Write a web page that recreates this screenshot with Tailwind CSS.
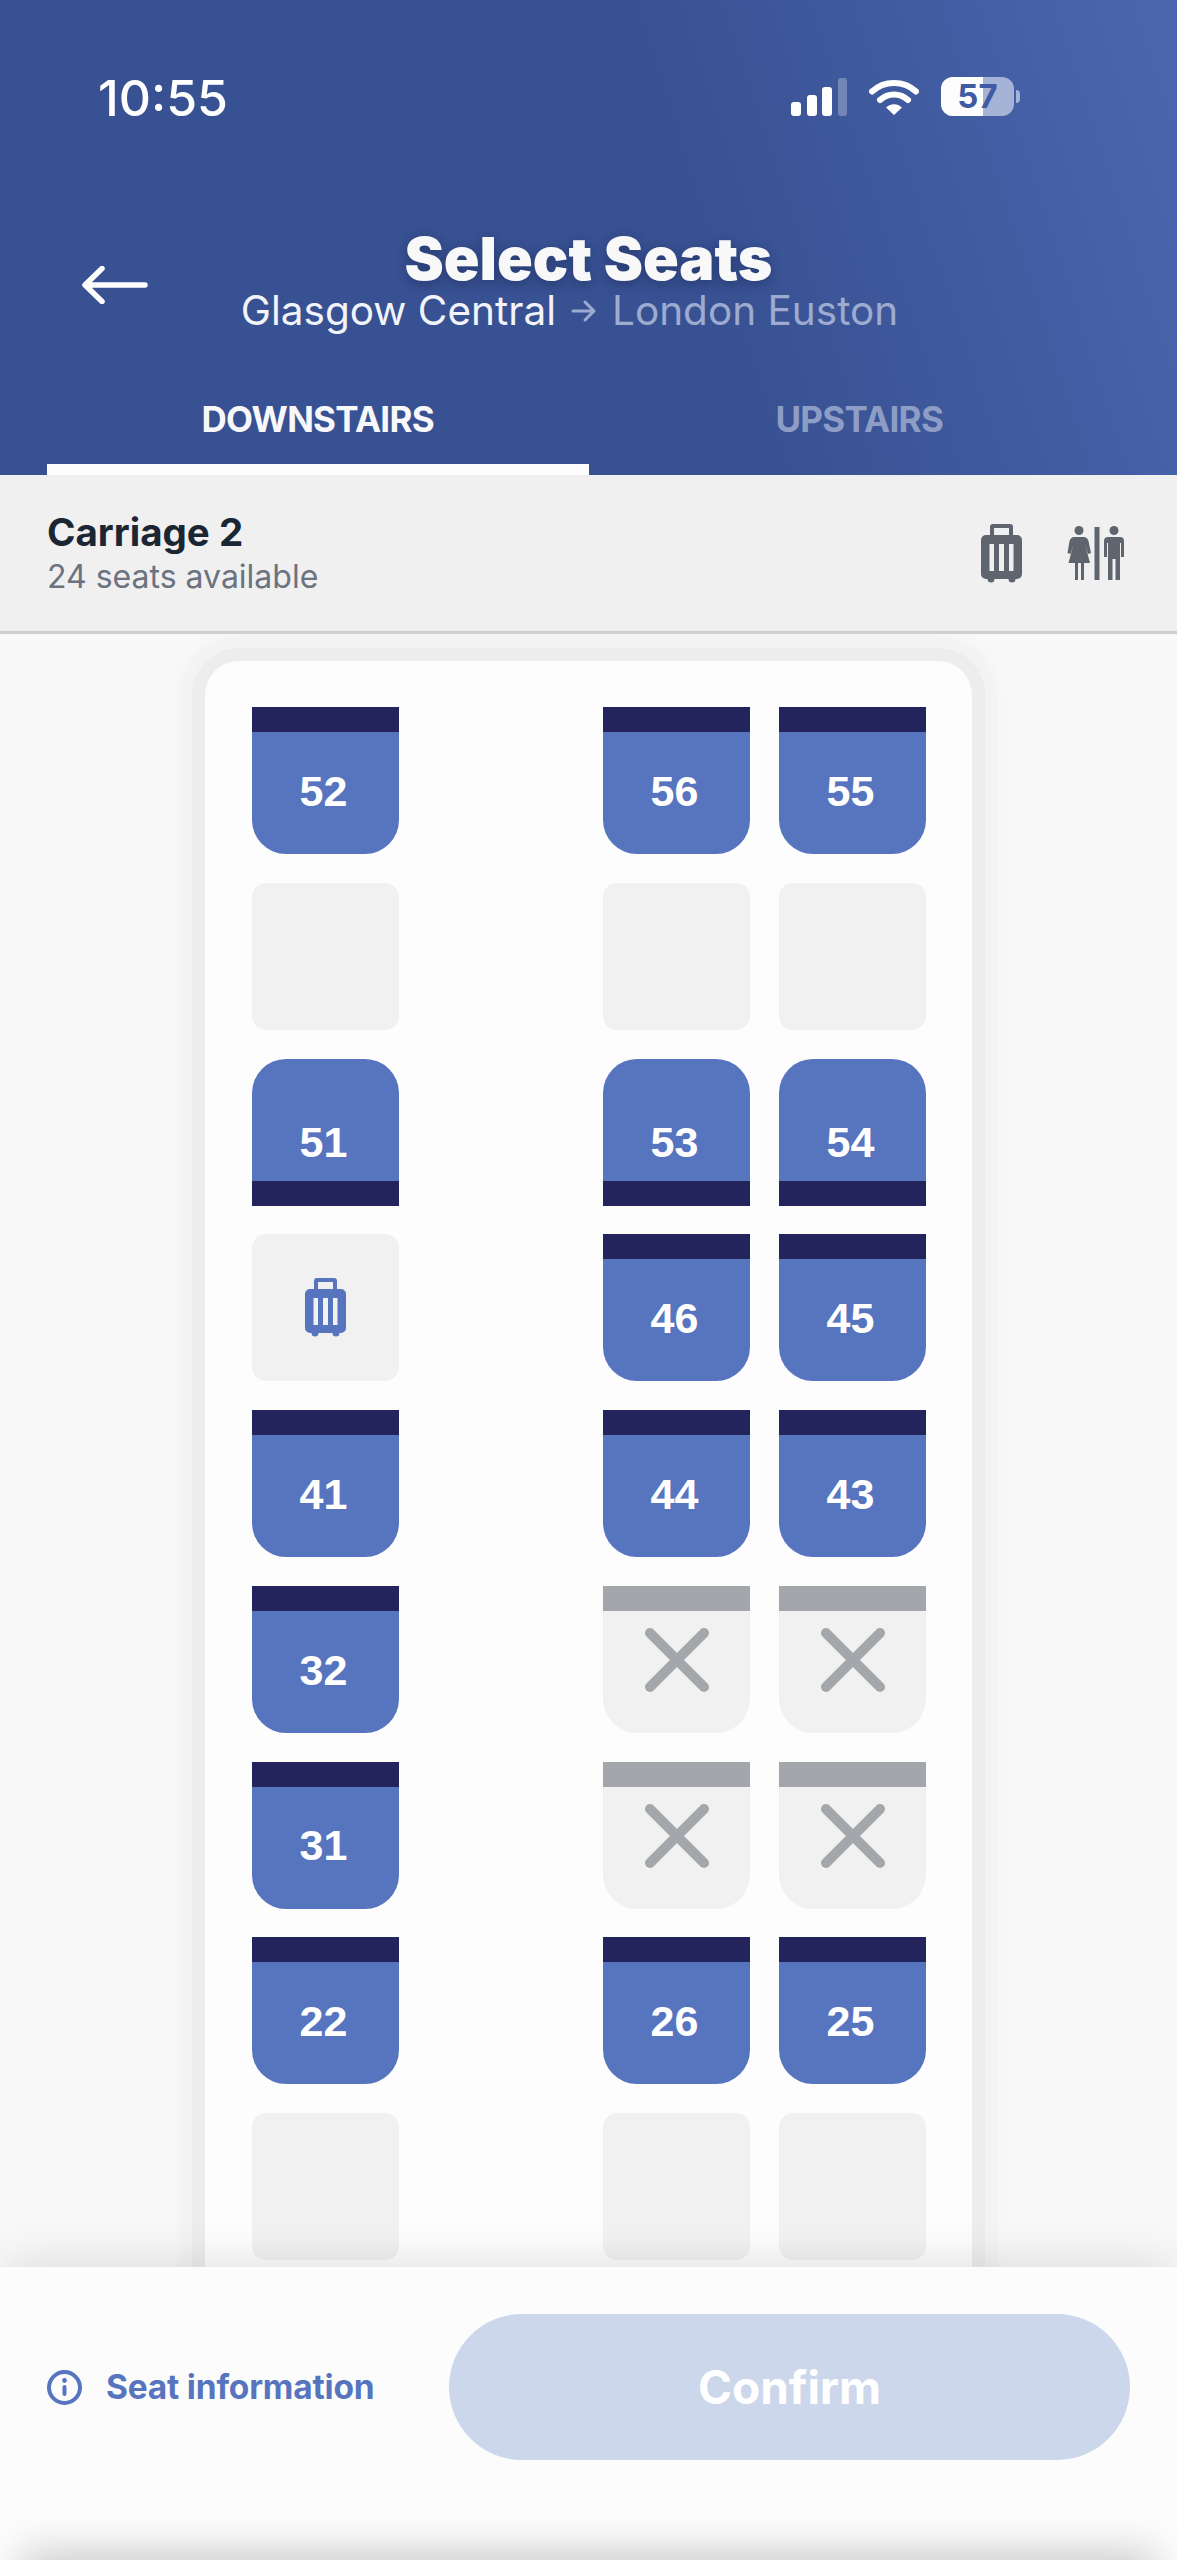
<!DOCTYPE html>
<html>
<head>
<meta charset="utf-8">
<script src="https://cdn.jsdelivr.net/npm/@tailwindcss/browser@4"></script>
</head>
<body class="m-0">
<div class="w-[1177px] h-[2560px] flex flex-col overflow-hidden bg-[#f8f8f8] font-['Inter',sans-serif]">
  <!-- Header -->
  <header class="h-[475px] shrink-0 flex flex-col text-white bg-[linear-gradient(72deg,#385192_0%,#385192_58%,#3f5a9e_76%,#4b67b0_100%)]">
    <div class="h-[200px] shrink-0 flex items-start justify-between pl-[98px] pr-[157px] pt-[70px]">
      <span class="text-[50px] leading-[56px] font-medium">10:55</span>
      <div class="flex items-center gap-[22px] pt-[7px]">
        <svg width="56" height="38" viewBox="0 0 56 38"><rect x="0" y="24" width="10" height="14" rx="3" fill="#fff"/><rect x="16" y="17" width="10" height="21" rx="3" fill="#fff"/><rect x="31" y="9" width="10" height="29" rx="3" fill="#fff"/><rect x="47" y="0" width="9" height="38" rx="3" fill="#fff" fill-opacity=".28"/></svg>
        <svg width="50" height="37" viewBox="0 0 50 37"><path d="M3 13.500C15 2 35 2 47 13.500" fill="none" stroke="#fff" stroke-width="6" stroke-linecap="round"/><path d="M11 22C19 14.500 31 14.500 39 22" fill="none" stroke="#fff" stroke-width="6" stroke-linecap="round"/><path d="M17 29.500C21.500 25 28.500 25 33 29.500L25 37Z" fill="#fff"/></svg>
        <div class="flex items-center gap-[2px]">
          <div class="relative w-[73px] h-[39px] rounded-[12px] overflow-hidden bg-[#a5b3d7] flex items-center justify-center">
            <div class="absolute left-0 top-0 bottom-0 w-[42px] bg-[#fdfdfe]"></div>
            <span class="relative text-[#3f5ba3] text-[33px] leading-none font-bold">57</span>
          </div>
          <div class="w-[4px] h-[13px] rounded-r-full bg-[#a5b3d7]"></div>
        </div>
      </div>
    </div>
    <div class="relative flex-1 flex flex-col items-center">
      <svg class="absolute left-[82px] top-[66px]" width="66" height="38" viewBox="0 0 66 38"><path d="M63 19H4M20 2.500 3 19 20 35.500" fill="none" stroke="#fff" stroke-width="5.500" stroke-linecap="round" stroke-linejoin="round"/></svg>
      <h1 class="text-[59px] leading-[66px] font-black mt-[26px] text-[#f8f8f8] [text-shadow:0_3px_12px_rgba(20,30,70,0.45)]">Select Seats</h1>
      <div class="flex items-center text-[40.5px] leading-[46px] -mt-[4px] ml-[-38px]">
        <span class="text-[#f2f4f9]">Glasgow Central</span>
        <svg class="mx-[15px]" width="26" height="26" viewBox="0 0 26 26"><path d="M2 13H23M14 4l9 9-9 9" fill="none" stroke="#9dabd0" stroke-width="3" stroke-linecap="round" stroke-linejoin="round"/></svg>
        <span class="text-[#9dabd0]">London Euston</span>
      </div>
    </div>
    <div class="h-[84px] shrink-0 px-[47px] grid grid-cols-2 text-center text-[35px] font-bold tracking-[-0.7px]">
      <div class="border-b-[11px] border-[#fdfdfd] pt-[8px] leading-[40px] text-[#f8f8fb]">DOWNSTAIRS</div>
      <div class="pt-[8px] leading-[40px] text-[#8e9dc6]">UPSTAIRS</div>
    </div>
  </header>

  <!-- Carriage bar -->
  <div class="relative z-[2] h-[159px] shrink-0 bg-[#f0f0f0] border-b-[3px] border-[#cfcfcf] pl-[47px] pr-[53px] flex items-center justify-between">
    <div class="-mt-[1px]">
      <div class="text-[38.5px] leading-[46px] font-bold text-[#1a2633]">Carriage 2</div>
      <div class="text-[32px] leading-[38px] mt-[3px] text-[#6b7280]">24 seats available</div>
    </div>
    <div class="flex items-center gap-[45px]">
      <svg class="mt-[2px]" width="41" height="60" viewBox="0 0 41 60"><path fill-rule="evenodd" fill="#5f656e" d="M12 0H29a3 3 0 0 1 3 3V11H36a5 5 0 0 1 5 5V50a5 5 0 0 1-5 5H34.500a3.500 3.500 0 0 1-7 0H13.500a3.500 3.500 0 0 1-7 0H5a5 5 0 0 1-5-5V16a5 5 0 0 1 5-5H9V3a3 3 0 0 1 3-3ZM13 4V11H28V4ZM8.500 20V47H13V20ZM18 20V47H23V20ZM28 20V47H32.500V20Z"/></svg>
      <svg width="57" height="54" viewBox="0 0 57 54" fill="#5f656e"><circle cx="12" cy="4.500" r="4.500"/><path d="M7 11H17C19 11 20.500 12.500 21.500 15L24 27 21 28 18 18 23 37H17V54H14V37H11V54H8V37H1.500L6.500 18 3.500 28 0.500 27 2.500 15C3.500 12.500 5 11 7 11Z"/><rect x="27.500" y="1" width="5" height="53"/><circle cx="47" cy="4.500" r="4.500"/><path d="M41 11H53A4 4 0 0 1 57 15V31H54V17H53V54H48.500V33H45.500V54H41V17H40V31H37V15A4 4 0 0 1 41 11Z"/></svg>
    </div>
  </div>

  <!-- Seat map -->
  <main class="relative flex-1 overflow-hidden pl-[205px] pt-[27px]">
    <div class="w-[767px] h-[1700px] rounded-[34px] bg-[#fdfdfd] pl-[47px] pt-[46px] shadow-[0_0_0_13px_#ededed,0_0_10px_26px_#f3f3f3] grid grid-cols-[147px_146px_147px_147px] auto-rows-[147px] gap-x-[29px] gap-y-[28.75px]">
      <!-- row 52 -->
      <div class="col-start-1 h-[147px] rounded-b-[34px] overflow-hidden bg-[#5775bf] border-t-[25px] border-[#24245c] flex items-center justify-center pr-[4px] pb-[4px] text-white font-['Liberation_Sans',sans-serif] font-bold text-[43px]">52</div>
      <div class="col-start-3 h-[147px] rounded-b-[34px] overflow-hidden bg-[#5775bf] border-t-[25px] border-[#24245c] flex items-center justify-center pr-[4px] pb-[4px] text-white font-['Liberation_Sans',sans-serif] font-bold text-[43px]">56</div>
      <div class="col-start-4 h-[147px] rounded-b-[34px] overflow-hidden bg-[#5775bf] border-t-[25px] border-[#24245c] flex items-center justify-center pr-[4px] pb-[4px] text-white font-['Liberation_Sans',sans-serif] font-bold text-[43px]">55</div>
      <!-- empty row -->
      <div class="col-start-1 h-[147px] rounded-[14px] bg-[#f1f1f1]"></div>
      <div class="col-start-3 h-[147px] rounded-[14px] bg-[#f1f1f1]"></div>
      <div class="col-start-4 h-[147px] rounded-[14px] bg-[#f1f1f1]"></div>
      <!-- flipped row -->
      <div class="col-start-1 h-[147px] rounded-t-[34px] overflow-hidden bg-[#5775bf] border-b-[25px] border-[#24245c] flex items-center justify-center pr-[4px] pt-[46px] text-white font-['Liberation_Sans',sans-serif] font-bold text-[43px]">51</div>
      <div class="col-start-3 h-[147px] rounded-t-[34px] overflow-hidden bg-[#5775bf] border-b-[25px] border-[#24245c] flex items-center justify-center pr-[4px] pt-[46px] text-white font-['Liberation_Sans',sans-serif] font-bold text-[43px]">53</div>
      <div class="col-start-4 h-[147px] rounded-t-[34px] overflow-hidden bg-[#5775bf] border-b-[25px] border-[#24245c] flex items-center justify-center pr-[4px] pt-[46px] text-white font-['Liberation_Sans',sans-serif] font-bold text-[43px]">54</div>
      <!-- luggage row -->
      <div class="col-start-1 h-[147px] rounded-[14px] bg-[#f1f1f1] flex items-center justify-center">
        <svg width="41" height="60" viewBox="0 0 41 60"><path fill-rule="evenodd" fill="#5775bf" d="M12 0H29a3 3 0 0 1 3 3V11H36a5 5 0 0 1 5 5V50a5 5 0 0 1-5 5H34.500a3.500 3.500 0 0 1-7 0H13.500a3.500 3.500 0 0 1-7 0H5a5 5 0 0 1-5-5V16a5 5 0 0 1 5-5H9V3a3 3 0 0 1 3-3ZM13 4V11H28V4ZM8.500 20V47H13V20ZM18 20V47H23V20ZM28 20V47H32.500V20Z"/></svg>
      </div>
      <div class="col-start-3 h-[147px] rounded-b-[34px] overflow-hidden bg-[#5775bf] border-t-[25px] border-[#24245c] flex items-center justify-center pr-[4px] pb-[4px] text-white font-['Liberation_Sans',sans-serif] font-bold text-[43px]">46</div>
      <div class="col-start-4 h-[147px] rounded-b-[34px] overflow-hidden bg-[#5775bf] border-t-[25px] border-[#24245c] flex items-center justify-center pr-[4px] pb-[4px] text-white font-['Liberation_Sans',sans-serif] font-bold text-[43px]">45</div>
      <!-- row 41 -->
      <div class="col-start-1 h-[147px] rounded-b-[34px] overflow-hidden bg-[#5775bf] border-t-[25px] border-[#24245c] flex items-center justify-center pr-[4px] pb-[4px] text-white font-['Liberation_Sans',sans-serif] font-bold text-[43px]">41</div>
      <div class="col-start-3 h-[147px] rounded-b-[34px] overflow-hidden bg-[#5775bf] border-t-[25px] border-[#24245c] flex items-center justify-center pr-[4px] pb-[4px] text-white font-['Liberation_Sans',sans-serif] font-bold text-[43px]">44</div>
      <div class="col-start-4 h-[147px] rounded-b-[34px] overflow-hidden bg-[#5775bf] border-t-[25px] border-[#24245c] flex items-center justify-center pr-[4px] pb-[4px] text-white font-['Liberation_Sans',sans-serif] font-bold text-[43px]">43</div>
      <!-- row 32 -->
      <div class="col-start-1 h-[147px] rounded-b-[34px] overflow-hidden bg-[#5775bf] border-t-[25px] border-[#24245c] flex items-center justify-center pr-[4px] pb-[4px] text-white font-['Liberation_Sans',sans-serif] font-bold text-[43px]">32</div>
      <div class="col-start-3 h-[147px] rounded-b-[34px] overflow-hidden bg-[#f1f1f1] border-t-[25px] border-[#a3a6aa] flex items-start justify-center pt-[16px]">
        <svg width="66" height="66" viewBox="0 0 66 66"><path d="M6 6 60 60M60 6 6 60" fill="none" stroke="#a3a6aa" stroke-width="10" stroke-linecap="round"/></svg>
      </div>
      <div class="col-start-4 h-[147px] rounded-b-[34px] overflow-hidden bg-[#f1f1f1] border-t-[25px] border-[#a3a6aa] flex items-start justify-center pt-[16px]">
        <svg width="66" height="66" viewBox="0 0 66 66"><path d="M6 6 60 60M60 6 6 60" fill="none" stroke="#a3a6aa" stroke-width="10" stroke-linecap="round"/></svg>
      </div>
      <!-- row 31 -->
      <div class="col-start-1 h-[147px] rounded-b-[34px] overflow-hidden bg-[#5775bf] border-t-[25px] border-[#24245c] flex items-center justify-center pr-[4px] pb-[4px] text-white font-['Liberation_Sans',sans-serif] font-bold text-[43px]">31</div>
      <div class="col-start-3 h-[147px] rounded-b-[34px] overflow-hidden bg-[#f1f1f1] border-t-[25px] border-[#a3a6aa] flex items-start justify-center pt-[16px]">
        <svg width="66" height="66" viewBox="0 0 66 66"><path d="M6 6 60 60M60 6 6 60" fill="none" stroke="#a3a6aa" stroke-width="10" stroke-linecap="round"/></svg>
      </div>
      <div class="col-start-4 h-[147px] rounded-b-[34px] overflow-hidden bg-[#f1f1f1] border-t-[25px] border-[#a3a6aa] flex items-start justify-center pt-[16px]">
        <svg width="66" height="66" viewBox="0 0 66 66"><path d="M6 6 60 60M60 6 6 60" fill="none" stroke="#a3a6aa" stroke-width="10" stroke-linecap="round"/></svg>
      </div>
      <!-- row 22 -->
      <div class="col-start-1 h-[147px] rounded-b-[34px] overflow-hidden bg-[#5775bf] border-t-[25px] border-[#24245c] flex items-center justify-center pr-[4px] pb-[4px] text-white font-['Liberation_Sans',sans-serif] font-bold text-[43px]">22</div>
      <div class="col-start-3 h-[147px] rounded-b-[34px] overflow-hidden bg-[#5775bf] border-t-[25px] border-[#24245c] flex items-center justify-center pr-[4px] pb-[4px] text-white font-['Liberation_Sans',sans-serif] font-bold text-[43px]">26</div>
      <div class="col-start-4 h-[147px] rounded-b-[34px] overflow-hidden bg-[#5775bf] border-t-[25px] border-[#24245c] flex items-center justify-center pr-[4px] pb-[4px] text-white font-['Liberation_Sans',sans-serif] font-bold text-[43px]">25</div>
      <!-- last empty row -->
      <div class="col-start-1 h-[147px] rounded-[14px] bg-[#f1f1f1]"></div>
      <div class="col-start-3 h-[147px] rounded-[14px] bg-[#f1f1f1]"></div>
      <div class="col-start-4 h-[147px] rounded-[14px] bg-[#f1f1f1]"></div>
    </div>
    <div class="absolute left-[14px] right-[14px] top-full h-[40px] shadow-[0_0_40px_8px_rgba(0,0,0,0.1)]"></div>
  </main>

  <!-- Bottom bar -->
  <footer class="relative h-[293px] shrink-0 overflow-hidden bg-[#fcfcfc] pl-[47px] pr-[47px] pt-[47px]">
    <div class="flex items-center justify-between h-[146px]">
      <div class="flex items-center gap-[24px]">
        <svg width="35" height="35" viewBox="0 0 35 35"><circle cx="17.500" cy="17.500" r="15.500" fill="none" stroke="#5775bf" stroke-width="4"/><rect x="15.500" y="15" width="4" height="11" rx="2" fill="#5775bf"/><circle cx="17.500" cy="10.500" r="2.400" fill="#5775bf"/></svg>
        <span class="text-[33.5px] leading-[40px] font-bold text-[#5775bf] tracking-[-0.2px]">Seat information</span>
      </div>
      <button class="w-[681px] h-[146px] rounded-[73px] bg-[#cdd7ec] text-white text-[46px] font-bold">Confirm</button>
    </div>
    <div class="absolute left-[30px] right-[30px] top-full h-[40px] shadow-[0_0_40px_8px_rgba(0,0,0,0.2)]"></div>
  </footer>
</div>
</body>
</html>
